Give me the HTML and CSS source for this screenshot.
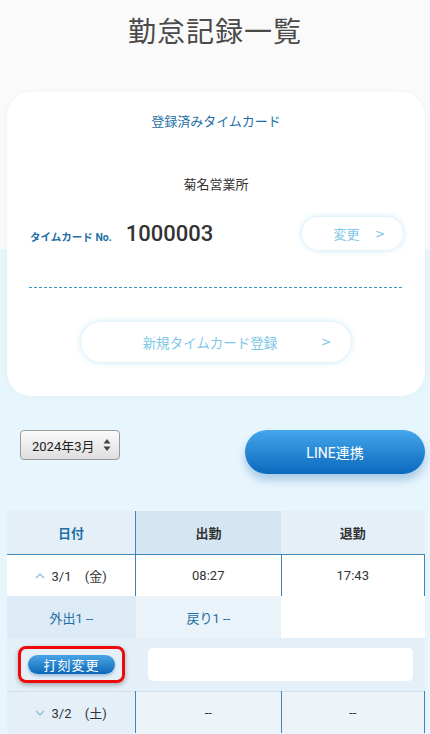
FILE: index.html
```html
<!DOCTYPE html>
<html lang="ja">
<head>
  <meta charset="UTF-8">
  <title>勤怠記録一覧</title>
  <link rel="stylesheet" href="styles.css">
</head>
<body>

  <h1 class="page-title">勤怠記録一覧</h1>

  <div class="card">
    <div class="card-label">登録済みタイムカード</div>
    <div class="office">菊名営業所</div>

    <div class="card-no-row">
      <span class="card-no-label">タイムカード No.</span>
      <span class="card-no">1000003</span>
      <a class="pill-button change-button" href="#">変更<span class="chev">&gt;</span></a>
    </div>

    <div class="dash-line"></div>

    <a class="pill-button new-button" href="#">新規タイムカード登録<span class="chev">&gt;</span></a>
  </div>

  <div class="toolbar">
    <div class="month-select">
      2024年3月
      <svg width="8" height="14" viewBox="0 0 8 14"><path d="M4 1 L7.5 5.5 H0.5 Z M4 13 L7.5 8.5 H0.5 Z" fill="#444"/></svg>
    </div>
    <a class="line-button" href="#">LINE連携</a>
  </div>

  <table class="log-table">
    <thead>
      <tr>
        <th class="col-date">日付</th>
        <th class="col-in">出勤</th>
        <th class="col-out">退勤</th>
      </tr>
    </thead>
    <tbody>
      <tr class="day-row open">
        <td class="col-date">
          <svg class="toggle" width="10" height="6" viewBox="0 0 10 6"><path d="M1 5 L5 1 L9 5" fill="none" stroke="#8fb6d2" stroke-width="1.2"/></svg>
          3/1 <span class="dow">(金)</span>
        </td>
        <td>08:27</td>
        <td>17:43</td>
      </tr>
      <tr class="sub-row">
        <td class="sub-out">外出1 --</td>
        <td class="sub-back">戻り1 --</td>
        <td class="sub-empty"></td>
      </tr>
      <tr class="edit-row">
        <td colspan="3">
          <div class="edit-inner">
            <div class="highlight">
              <button class="stamp-button">打刻変更</button>
            </div>
            <input class="memo" type="text">
          </div>
        </td>
      </tr>
      <tr class="day-row closed">
        <td class="col-date">
          <svg class="toggle" width="10" height="6" viewBox="0 0 10 6"><path d="M1 1 L5 5 L9 1" fill="none" stroke="#8fb6d2" stroke-width="1.2"/></svg>
          3/2 <span class="dow">(土)</span>
        </td>
        <td>--</td>
        <td>--</td>
      </tr>
    </tbody>
  </table>

</body>
</html>
```

FILE: styles.css
```css
body {
  margin: 0;
  font-family: Roboto, "Noto Sans CJK JP", sans-serif;
  color: #333;
  background: #e7f5fd linear-gradient(#fafafa 0, #fafafa 249px, #e7f5fd 249px) no-repeat;
  background-size: 100% 260px;
}

.page-title {
  margin: 0;
  padding-top: 13px;
  height: 92px;
  box-sizing: border-box;
  text-align: center;
  font-size: 28px;
  line-height: 40px;
  font-weight: 400;
  color: #4a4a4a;
  letter-spacing: 1px;
}

.card {
  margin: 0 5px 0 7px;
  padding: 20px 22px 34px;
  background-color: white;
  border-radius: 24px;
  box-shadow: 0 0 10px rgba(0, 0, 0, 0.03);
  text-align: center;
}

.card-label {
  font-size: 13px;
  line-height: 20px;
  color: #1f6fa6;
}

.office {
  margin-top: 43px;
  font-size: 13px;
  line-height: 20px;
  color: #333;
}

.card-no-row {
  display: flex;
  align-items: center;
  margin-top: 22px;
  height: 33px;
}

.card-no-label {
  font-size: 10.5px;
  font-weight: 700;
  color: #1f6fa6;
  margin-left: 1px;
  margin-top: 6px;
}

.card-no {
  font-size: 22px;
  font-weight: 500;
  color: #333;
  margin-left: 14px;
}

.pill-button {
  display: flex;
  align-items: center;
  justify-content: center;
  position: relative;
  background-color: white;
  border-radius: 20px;
  color: #7ec7e8;
  text-decoration: none;
  box-shadow: 0 0 6px rgba(140, 205, 240, 0.55);
}

.pill-button .chev {
  position: absolute;
  font-family: "DejaVu Sans", sans-serif;
  font-size: 12px;
}

.change-button {
  margin-left: auto;
  width: 101px;
  height: 33px;
  font-size: 13px;
  padding-right: 12px;
  box-sizing: border-box;
}

.change-button .chev {
  right: 18px;
}

.dash-line {
  margin-top: 37px;
  height: 1px;
  background-image: linear-gradient(to right, #3f95c4 0, #3f95c4 3px, transparent 3px);
  background-size: 5px 1px;
}

.new-button {
  margin: 34px auto 0;
  width: 270px;
  height: 40px;
  font-size: 13.5px;
  padding-right: 12px;
  box-sizing: border-box;
}

.new-button .chev {
  right: 20px;
}

.toolbar {
  display: flex;
  justify-content: space-between;
  align-items: flex-start;
  margin: 34px 5px 0 20px;
}

.month-select {
  display: flex;
  align-items: center;
  gap: 8px;
  width: 100px;
  height: 30px;
  box-sizing: border-box;
  padding-left: 11px;
  border: 1px solid #9a9a9a;
  border-radius: 4px;
  background: linear-gradient(#fbfbfb, #dedede);
  font-size: 13px;
  color: #222;
}

.line-button {
  display: flex;
  align-items: center;
  justify-content: center;
  width: 180px;
  height: 44px;
  border-radius: 22px;
  background: linear-gradient(#45a7ec, #0a69bd);
  color: white;
  font-size: 14px;
  text-decoration: none;
  box-shadow: 0 6px 8px rgba(0, 90, 170, 0.28);
}

.log-table {
  margin: 37px 5px 0 7px;
  width: 418px;
  border-collapse: collapse;
  table-layout: fixed;
  font-size: 13px;
}

.log-table th, .log-table td {
  padding: 0;
  text-align: center;
  font-weight: 400;
}

.log-table th {
  height: 43px;
  font-weight: 700;
  background-color: #e4eff7;
  border-bottom: 1px solid #3d86bb;
}

.log-table th.col-date {
  width: 128px;
  color: #1f6fa6;
  border-right: 1px solid #3d86bb;
}

.log-table th.col-in {
  width: 145px;
  background-color: #d4e6f2;
}

.day-row td {
  height: 41px;
  border-right: 1px solid #3d86bb;
  color: #333;
}

.day-row.open td {
  background-color: white;
}

.day-row.closed td {
  background-color: #ecf4fa;
  border-top: 1px solid #cfe1ee;
}

.day-row.closed td.col-date {
  background-color: #e4eff7;
}

.toggle {
  margin-right: 3px;
  vertical-align: 2px;
}

.dow {
  margin-left: 10px;
}

.sub-row td {
  height: 42px;
  color: #1f6fa6;
}

.sub-out {
  background-color: #dcebf5;
}

.sub-back {
  background-color: #eaf3fa;
}

.sub-empty {
  background-color: white;
}

.edit-row td {
  height: 53px;
  background-color: #e4eff7;
}

.edit-inner {
  display: flex;
  align-items: center;
  padding: 0 12px 0 11px;
}

.highlight {
  padding: 6px 7px;
  border: 3px solid #ee0a0a;
  border-radius: 8px;
  box-shadow: 0 2px 5px rgba(0, 0, 0, 0.3);
  display: flex;
}

.stamp-button {
  width: 87px;
  height: 19px;
  padding: 0;
  border: none;
  border-radius: 10px;
  background: linear-gradient(#4aa5e6, #0d68b8);
  color: white;
  font-family: "Noto Sans CJK JP", sans-serif;
  font-size: 13px;
  letter-spacing: 1px;
  box-shadow: 0 2px 3px rgba(0, 80, 160, 0.3);
}

.memo {
  margin-left: 23px;
  flex: 1;
  height: 31px;
  border: none;
  border-radius: 5px;
  background-color: white;
}
```
